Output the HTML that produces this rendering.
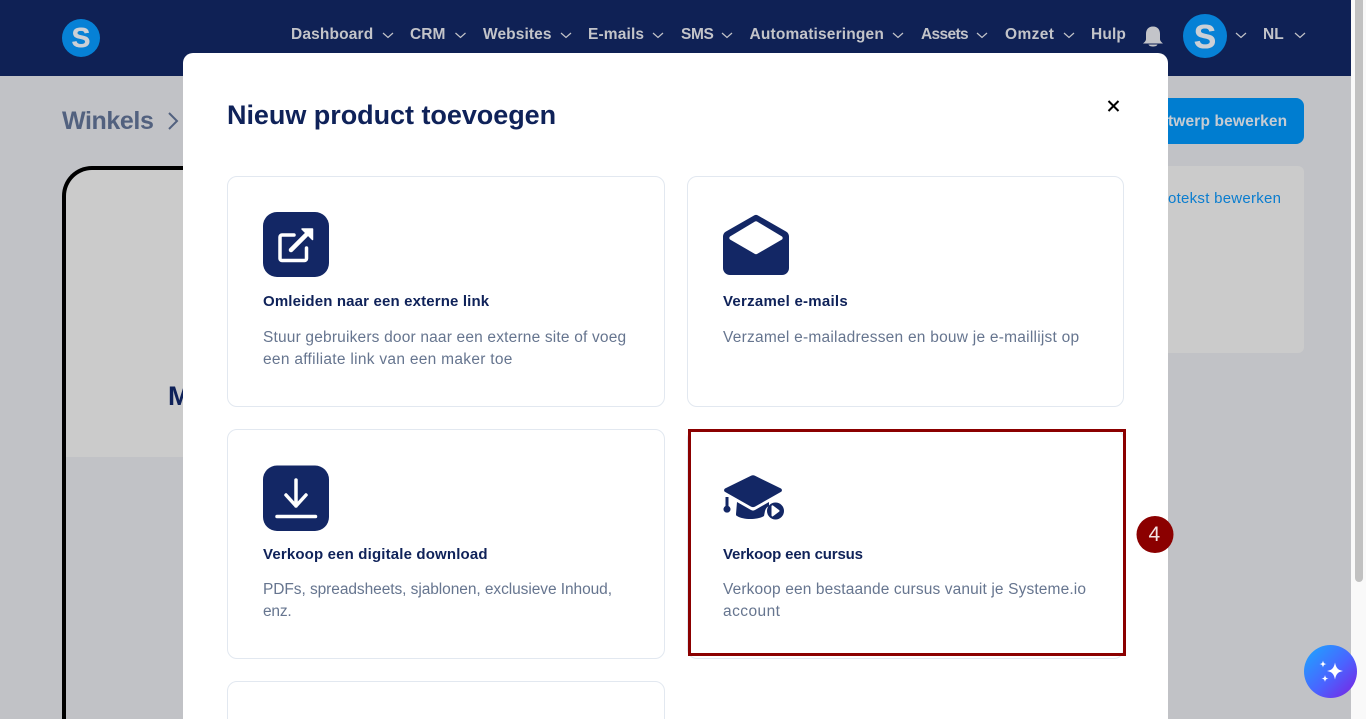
<!DOCTYPE html>
<html lang="nl"><head><meta charset="utf-8"><title>Nieuw product toevoegen</title>
<style>
html,body{margin:0;padding:0;width:1366px;height:719px;overflow:hidden;background:#c1c2c6;font-family:"Liberation Sans",sans-serif}
#w{position:relative;width:1366px;height:719px;overflow:hidden}
.a{position:absolute}
.t{position:absolute;white-space:nowrap;line-height:1}
.n{font-size:15.5px;font-weight:700;color:#c3c4c9;top:27px;height:15px}
.card{position:absolute;box-sizing:border-box;border:1px solid #e2e8f0;border-radius:10px;background:#fff}
.h{font-size:15px;font-weight:700;color:#0f2259}
.d{font-size:15.5px;color:#66758f}
</style></head><body><div id="w">
<div class="a" style="left:0;top:0;width:1351px;height:76px;background:#0f2155"></div>
<div class="a" style="left:1351px;top:0;width:15px;height:719px;background:#f9f9f9"></div>
<div class="a" style="left:1355px;top:0;width:8px;height:582px;border-radius:0 0 4px 4px;background:#c1c1c1"></div>

<div class="a" style="left:62px;top:19px;width:38px;height:38px;border-radius:50%;background:#0681d6"></div>
<div class="t" style="left:62px;top:24px;width:38px;text-align:center;font-size:28px;font-weight:700;color:#ccd0d6;-webkit-text-stroke:.5px #ccd0d6">S</div>

<div class="t n" style="left:291px;letter-spacing:.15px">Dashboard</div>
<div class="t n" style="left:410px;letter-spacing:.05px">CRM</div>
<div class="t n" style="left:483px;letter-spacing:.1px">Websites</div>
<div class="t n" style="left:588px;letter-spacing:.15px">E-mails</div>
<div class="t n" style="left:681px;letter-spacing:-.4px">SMS</div>
<div class="t n" style="left:749.5px;letter-spacing:.17px">Automatiseringen</div>
<div class="t n" style="left:921px;letter-spacing:-.65px">Assets</div>
<div class="t n" style="left:1005px;letter-spacing:.4px">Omzet</div>
<div class="t n" style="left:1091px;letter-spacing:.15px">Hulp</div>
<div class="t n" style="left:1263px;letter-spacing:0">NL</div>
<svg class="a" style="left:0;top:0" width="1351" height="76" fill="none" stroke="#c3c4c9" stroke-width="1.2">
<path d="M383 33l5 4.500 5-4.500M455.500 33l5 4.500 5-4.500M561 33l5 4.500 5-4.500M653 33l5 4.500 5-4.500M722 33l5 4.500 5-4.500M893 33l5 4.500 5-4.500M977 33l5 4.500 5-4.500M1064 33l5 4.500 5-4.500M1236 33l5 4.500 5-4.500M1295 33l5 4.500 5-4.500"/>
<path fill="#c3c4c9" stroke="none" d="M1153 26.500c-5 0-7 3.500-7 7.500v5c0 2-1.500 3-3 4.500h20c-1.500-1.500-3-2.500-3-4.500v-5c0-4-2-7.500-7-7.500zM1148.500 44.500h9c-.5 1.500-2.500 2-4.500 2s-4-.5-4.500-2z"/>
</svg>
<div class="a" style="left:1183px;top:14px;width:44px;height:44px;border-radius:50%;background:#0681d6"></div>
<div class="t" style="left:1183px;top:20px;width:44px;text-align:center;font-size:33px;font-weight:700;color:#ccd0d6;-webkit-text-stroke:.6px #ccd0d6">S</div>

<div class="t" style="left:62px;top:109px;font-size:25px;font-weight:700;color:#52617f;letter-spacing:-.4px">Winkels</div>
<svg class="a" style="left:165px;top:111px" width="16" height="20" fill="none" stroke="#52617f" stroke-width="2"><path d="M4 2l8 8-8 8"/></svg>

<div class="a" style="left:62px;top:166px;width:300px;height:291px;box-sizing:border-box;border:4px solid #000;border-right:0;border-bottom:0;border-radius:30px 0 0 0;background:#cbcbcb"></div>
<div class="a" style="left:62px;top:457px;width:4px;height:262px;background:#000"></div>
<div class="t" style="left:168px;top:383px;font-size:27px;font-weight:700;color:#0f2259">M</div>

<div class="a" style="left:1100px;top:98px;width:204px;height:46px;border-radius:8px;background:#007dd0"></div>
<div class="t" style="left:1168px;top:114px;font-size:15.500px;font-weight:700;color:#c6ccd3;letter-spacing:.15px">twerp bewerken</div>
<div class="a" style="left:1100px;top:166px;width:204px;height:187px;border-radius:6px;background:#cbcbcb"></div>
<div class="t" style="left:1168px;top:191px;font-size:15px;color:#0a7dcf;letter-spacing:.27px">otekst bewerken</div>

<div class="a" style="left:183px;top:53px;width:985px;height:680px;border-radius:10px;background:#fff"></div>
<div class="t" style="left:227px;top:102px;font-size:27px;font-weight:700;color:#0f2259;letter-spacing:-.04px">Nieuw product toevoegen</div>
<svg class="a" style="left:1106px;top:98px" width="16" height="16" fill="none" stroke="#000" stroke-width="2"><path d="M2.500 3l10 10M12.500 3l-10 10"/></svg>

<div class="card" style="left:227px;top:176px;width:438px;height:231px"></div>
<div class="card" style="left:687px;top:176px;width:437px;height:231px"></div>
<div class="card" style="left:227px;top:429px;width:438px;height:230px"></div>
<div class="card" style="left:687px;top:429px;width:437px;height:230px"></div>
<div class="card" style="left:227px;top:681px;width:438px;height:60px"></div>
<div class="a" style="left:688px;top:429px;width:438px;height:227px;box-sizing:border-box;border:3px solid #8b0000"></div>

<svg class="a" style="left:0;top:0" width="1366" height="719">
<rect x="263" y="212" width="66" height="65" rx="14" fill="#132765"/>
<path d="M294 235h-12a2 2 0 0 0-2 2v21.500a2 2 0 0 0 2 2h22.500a2 2 0 0 0 2-2V248" fill="none" stroke="#fff" stroke-width="3.500" stroke-linecap="round"/>
<path d="M291 250l15-15" fill="none" stroke="#fff" stroke-width="4.500" stroke-linecap="round"/>
<path d="M302 229h10.500v10.500z" fill="#fff" stroke="#fff" stroke-width="1.500" stroke-linejoin="round"/>

<path d="M754 215.500a4 4 0 0 1 4 0l28 16a6 6 0 0 1 3 5V268a7 7 0 0 1-7 7h-52a7 7 0 0 1-7-7v-31.500a6 6 0 0 1 3-5z" fill="#132765"/>
<path d="M755 221.500a2.500 2.500 0 0 1 2 0l25 15a2 2 0 0 1 0 3l-25 14.500a2.500 2.500 0 0 1-2 0l-25-14.500a2 2 0 0 1 0-3z" fill="#fff"/>

<rect x="263" y="465.500" width="66" height="65.500" rx="14" fill="#132765"/>
<path d="M296 480v26M286 495l10 11 10-11M277 516.500h38.500" fill="none" stroke="#fff" stroke-width="3.500" stroke-linecap="round" stroke-linejoin="round"/>

<path d="M751 475.800a4 4 0 0 1 4 0l26 12.700a2 2 0 0 1 0 3.400l-26 14.700a4 4 0 0 1-4 0l-26-14.700a2 2 0 0 1 0-3.400z" fill="#132765"/>
<path d="M725.500 497h3v9a3.500 3.500 0 1 1-3 0z" fill="#132765"/>
<path d="M737 502l14 8a4 4 0 0 0 4 0l14-8v4c-2 1-3 2-4 5l-1 5c-5 3.500-20 4.500-27 0-1-.500-1-1-1-2z" fill="#132765"/>
<circle cx="775.500" cy="511" r="8.500" fill="#132765"/>
<path d="M771.500 506a1 1 0 0 1 1.500-.5l6 4.500a1 1 0 0 1 0 1.800l-6 4.500a1 1 0 0 1-1.500-.8z" fill="#fff"/>

<circle cx="1155" cy="534.500" r="18.500" fill="#8b0000"/>
<defs><linearGradient id="g" x1="0" y1="0" x2="1" y2="1"><stop offset=".1" stop-color="#239dff"/><stop offset=".55" stop-color="#4a63ff"/><stop offset="1" stop-color="#7e1fe0"/></linearGradient></defs>
<circle cx="1330.500" cy="671.500" r="26.500" fill="url(#g)"/>
<path d="M1335 662.500c1 5 2.500 7.500 8 8.500-5.500 1-7 3.500-8 8.500-1-5-2.500-7.500-8-8.500 5.500-1 7-3.500 8-8.500zM1323 660.500c.5 2.700 1.300 3.200 3.500 3.500-2.200.5-3 1-3.500 3.500-.5-2.500-1.300-3-3.500-3.500 2.200-.3 3-.8 3.500-3.500zM1325 675c.5 2.700 1.300 3.200 3.500 3.500-2.200.5-3 1-3.500 3.500-.5-2.500-1.300-3-3.500-3.500 2.200-.3 3-.8 3.500-3.500z" fill="#fff"/>
</svg>

<div class="t" style="left:1148.500px;top:524px;font-size:21px;color:#f3e3e3">4</div>

<div class="t h" style="left:263px;top:294px;letter-spacing:.15px">Omleiden naar een externe link</div>
<div class="t d" style="left:263px;top:330px;letter-spacing:.18px">Stuur gebruikers door naar een externe site of voeg</div>
<div class="t d" style="left:263px;top:352px;letter-spacing:.29px">een affiliate link van een maker toe</div>

<div class="t h" style="left:723px;top:294px;letter-spacing:.25px">Verzamel e-mails</div>
<div class="t d" style="left:723px;top:330px;letter-spacing:.24px">Verzamel e-mailadressen en bouw je e-maillijst op</div>

<div class="t h" style="left:263px;top:547px;letter-spacing:.16px">Verkoop een digitale download</div>
<div class="t d" style="left:263px;top:582px;letter-spacing:-.07px">PDFs, spreadsheets, sjablonen, exclusieve Inhoud,</div>
<div class="t d" style="left:263px;top:604px;letter-spacing:-.2px">enz.</div>

<div class="t h" style="left:723px;top:547px;letter-spacing:-.15px">Verkoop een cursus</div>
<div class="t d" style="left:723px;top:582px;letter-spacing:.13px">Verkoop een bestaande cursus vanuit je Systeme.io</div>
<div class="t d" style="left:723px;top:604px;letter-spacing:.45px">account</div>
</div></body></html>
